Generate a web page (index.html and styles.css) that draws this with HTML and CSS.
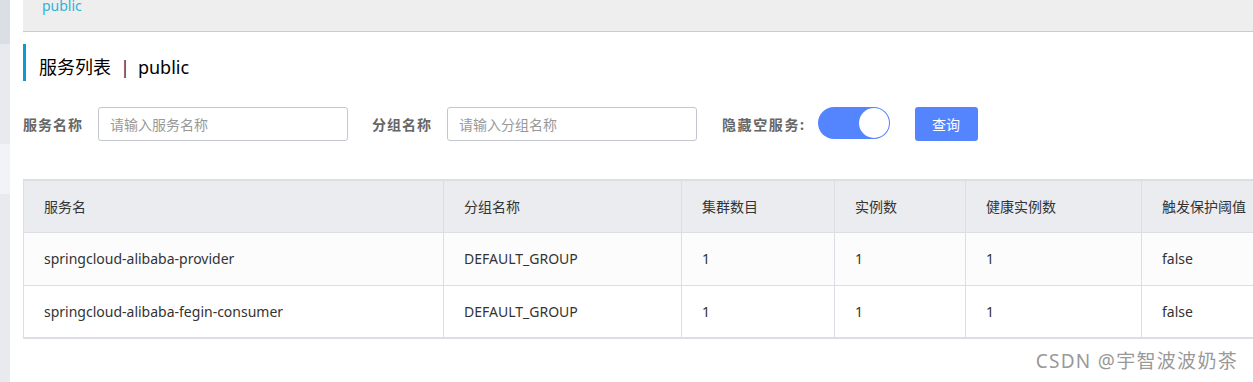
FILE: index.html
```html
<!DOCTYPE html>
<html>

<head>
    <title>服务列表</title>
    <link rel="stylesheet" href="styles.css">
</head>

<body>
<div class="side">
    <div class="side-top"></div>
    <div class="side-item"></div>
    <div class="side-item active"></div>
    <div class="side-rest"></div>
</div>

<div class="main">
    <div class="crumb">
        <span class="crumb-text">public</span>
    </div>

    <h1 class="page-title">服务列表<span class="sep">|</span>public</h1>

    <form class="search" action="">
        <label class="label">服务名称</label>
        <input class="field" type="text" placeholder="请输入服务名称" />
        <label class="label">分组名称</label>
        <input class="field" type="text" placeholder="请输入分组名称" />
        <label class="label label-switch">隐藏空服务:</label>
        <span class="switch"><span class="knob"></span></span>
        <button class="btn" type="button">查询</button>
    </form>

    <div class="table-wrap">
        <table class="list">
            <colgroup>
                <col style="width: 420px">
                <col style="width: 238px">
                <col style="width: 153px">
                <col style="width: 131px">
                <col style="width: 176px">
                <col style="width: 200px">
            </colgroup>
            <thead>
                <tr>
                    <th>服务名</th>
                    <th>分组名称</th>
                    <th>集群数目</th>
                    <th>实例数</th>
                    <th>健康实例数</th>
                    <th>触发保护阈值</th>
                </tr>
            </thead>
            <tbody>
                <tr>
                    <td>springcloud-alibaba-provider</td>
                    <td>DEFAULT_GROUP</td>
                    <td>1</td>
                    <td>1</td>
                    <td>1</td>
                    <td>false</td>
                </tr>
                <tr>
                    <td>springcloud-alibaba-fegin-consumer</td>
                    <td>DEFAULT_GROUP</td>
                    <td>1</td>
                    <td>1</td>
                    <td>1</td>
                    <td>false</td>
                </tr>
            </tbody>
        </table>
    </div>
</div>

<div class="watermark">CSDN @宇智波波奶茶</div>
</body>
</html>
```

FILE: styles.css
```css
* {
    box-sizing: border-box;
}
body, html {
    padding: 0;
    margin: 0;
}
body {
    display: flex;
    width: 1253px;
    height: 382px;
    overflow: hidden;
    font-family: "Noto Sans", "Noto Sans CJK SC", sans-serif;
    font-size: 14px;
    color: #333;
    background-color: #fff;
}
.side {
    width: 10px;
    display: flex;
    flex-direction: column;
    flex-shrink: 0;
}
.side-top {
    height: 44px;
    background-color: #dadee5;
}
.side-item {
    height: 100px;
    background-color: #e8eaee;
}
.side-item.active {
    height: 50px;
    background-color: #f2f3f6;
}
.side-rest {
    flex: 1;
    background-color: #e8eaee;
}
.main {
    flex: 1;
    margin-left: 13px;
    overflow: hidden;
}
.crumb {
    display: flex;
    align-items: flex-start;
    height: 32px;
    background-color: #eeeeee;
    border-bottom: 1px solid #cccccc;
    padding-left: 19px;
}
.crumb-text {
    margin-top: -3px;
    line-height: 18px;
    color: #2fb3d9;
}
.page-title {
    margin: 12px 0 0 0;
    height: 37px;
    padding: 10px 0 0 13px;
    line-height: 27px;
    border-left: 3px solid #0b9bd1;
    font-size: 18px;
    font-weight: normal;
    color: #000;
}
.sep {
    margin: 0 8px 0 9px;
    color: #1c2260;
}
.search {
    display: flex;
    align-items: center;
    margin-top: 26px;
    height: 34px;
}
.label {
    font-weight: bold;
    color: #666;
    letter-spacing: 1px;
    margin-right: 15px;
}
.label-switch {
    margin-left: 1px;
    letter-spacing: 1.6px;
    margin-right: 12px;
}
.field {
    width: 250px;
    height: 34px;
    border: 1px solid #c4c6cf;
    border-radius: 3px;
    padding: 0 11px;
    font-family: "Noto Sans", "Noto Sans CJK SC", sans-serif;
    font-size: 14px;
    color: #333;
    margin-right: 24px;
}
.field::placeholder {
    color: #999;
}
.switch {
    width: 72px;
    height: 32px;
    border-radius: 16px;
    background-color: #5584ff;
    display: flex;
    justify-content: flex-end;
    align-items: center;
    padding-right: 1px;
    margin-top: -2px;
}
.knob {
    width: 30px;
    height: 30px;
    border-radius: 50%;
    background-color: #fff;
}
.btn {
    margin-left: 25px;
    width: 63px;
    height: 34px;
    border: 0;
    border-radius: 3px;
    background-color: #5584ff;
    color: #fff;
    font-family: "Noto Sans", "Noto Sans CJK SC", sans-serif;
    font-size: 14px;
}
.table-wrap {
    margin-top: 38px;
    width: 1400px;
}
.list {
    table-layout: fixed;
    border-collapse: collapse;
    width: 1318px;
    border-top: 2px solid #dcdee3;
    border-bottom: 2px solid #dcdee3;
    border-left: 1px solid #dcdee3;
}
.list th, .list td {
    text-align: left;
    padding: 0 0 0 20px;
    border-right: 1px solid #dcdee3;
    border-bottom: 1px solid #dcdee3;
    font-weight: normal;
    white-space: nowrap;
    overflow: hidden;
}
.list th {
    height: 52px;
    background-color: #ebecf0;
}
.list td {
    height: 53px;
}
.list tbody tr:nth-child(odd) td {
    background-color: #fcfcfd;
}
.watermark {
    position: absolute;
    right: 15px;
    bottom: 8px;
    font-size: 19px;
    letter-spacing: 1.3px;
    color: #999;
}
```
